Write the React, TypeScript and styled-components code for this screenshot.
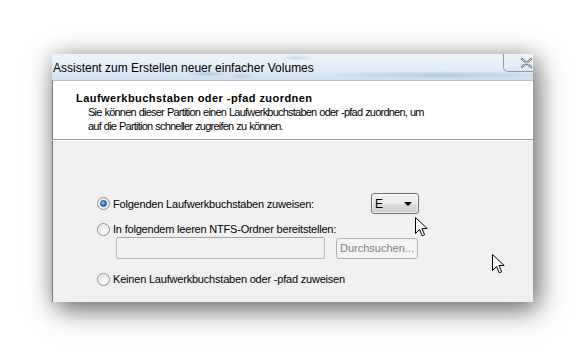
import React from 'react';
import styled, { createGlobalStyle } from 'styled-components';

const GlobalStyle = createGlobalStyle`
  html, body {
    margin: 0;
    padding: 0;
    background: #ffffff;
  }
  body {
    width: 585px;
    height: 354px;
    overflow: hidden;
    font-family: "Liberation Sans", Arial, sans-serif;
  }
`;

const Page = styled.div`
  position: relative;
  width: 585px;
  height: 354px;
  padding: 54px 0 0 52px;
  box-sizing: border-box;
`;

const Dialog = styled.div`
  width: 481px;
  height: 248px;
  display: flex;
  flex-direction: column;
  box-shadow: 5px 8px 26px rgba(0, 0, 0, 0.55), 0 0 20px rgba(0, 0, 0, 0.16);
  overflow: hidden;
  background: #f0f0f0;
`;

const TitleBar = styled.div`
  height: 26px;
  flex: none;
  display: flex;
  align-items: flex-start;
  overflow: hidden;
  background:
    radial-gradient(ellipse 22px 3px at 155px 20px, rgba(110, 150, 200, 0.35), transparent),
    radial-gradient(ellipse 14px 3px at 190px 22px, rgba(110, 150, 200, 0.3), transparent),
    radial-gradient(ellipse 18px 3px at 245px 4px, rgba(110, 150, 200, 0.3), transparent),
    radial-gradient(ellipse 120px 4px at 390px 21px, rgba(110, 150, 200, 0.35), transparent),
    linear-gradient(to bottom, #eef4fa 0%, #e3edf7 55%, #cfdff0 100%);
`;

const TitleText = styled.div`
  padding: 6px 0 0 1px;
  font-size: 12px;
  line-height: 16px;
  color: #000;
`;

const CloseButton = styled.div`
  margin-left: auto;
  margin-right: -16px;
  width: 44px;
  height: 17px;
  flex: none;
  border: 1px solid #8a9aa8;
  border-top: none;
  border-radius: 0 0 5px 5px;
  background: linear-gradient(to bottom, #f1f5f9, #dde7f0);
  display: flex;
  align-items: center;
  justify-content: center;
`;

const Header = styled.div`
  height: 60px;
  flex: none;
  box-sizing: border-box;
  background: #ffffff;
  border-left: 1px solid #7a7a7a;
  border-top: 1px solid #b7c4d0;
  border-bottom: 1px solid #a0a0a0;
  padding: 10px 0 0 23px;
`;

const HeaderTitle = styled.div`
  font-size: 11px;
  font-weight: bold;
  line-height: 14px;
  color: #000;
  letter-spacing: 0.45px;
`;

const HeaderText = styled.div`
  padding-left: 12px;
  font-size: 11px;
  line-height: 14px;
  color: #000;
  letter-spacing: -0.78px;
  word-spacing: 0.6px;
`;

const Body = styled.div`
  flex: 1;
  border-left: 1px solid #7a7a7a;
  border-top: 1px solid #ffffff;
  padding: 0 0 0 44px;
  display: flex;
  flex-direction: column;
  font-size: 11px;
  color: #000;
`;

const OptionRow = styled.div<{ $height: number; $top: number; $indent?: number }>`
  width: 322px;
  height: ${(p) => p.$height}px;
  margin-top: ${(p) => p.$top}px;
  padding-left: ${(p) => p.$indent ?? 0}px;
  box-sizing: border-box;
  display: flex;
  align-items: center;
  gap: 3px;
`;

const Radio = styled.span<{ $checked?: boolean }>`
  width: 11px;
  height: 11px;
  flex: none;
  border-radius: 50%;
  border: 1px solid #8f8f8f;
  background: radial-gradient(circle at 60% 65%, #ffffff 0%, #e8e8e8 55%, #cfcfcf 100%);
  display: flex;
  align-items: center;
  justify-content: center;
  box-shadow: inset 0 0 0 1px #f6f6f6;

  &::after {
    content: '';
    display: ${(p) => (p.$checked ? 'block' : 'none')};
    width: 5px;
    height: 5px;
    border-radius: 50%;
    border: 1px solid #1c4f8f;
    background: radial-gradient(circle at 40% 35%, #9fd1ff 0%, #2f7ad8 55%, #104a98 100%);
  }
`;

const Label = styled.span`
  line-height: 14px;
  white-space: nowrap;
  letter-spacing: -0.2px;
`;

const Combo = styled.div`
  margin-left: auto;
  width: 48px;
  height: 21px;
  box-sizing: border-box;
  border: 1px solid #707070;
  border-radius: 3px;
  background: linear-gradient(to bottom, #f2f2f2 0%, #ebebeb 50%, #dddddd 51%, #cfcfcf 100%);
  box-shadow: inset 0 0 0 1px rgba(255, 255, 255, 0.7);
  display: flex;
  align-items: center;
  justify-content: space-between;
  padding: 0 6px 0 3px;
  font-size: 12px;
`;

const Arrow = styled.span`
  width: 0;
  height: 0;
  border-left: 4px solid transparent;
  border-right: 4px solid transparent;
  border-top: 4px solid #000;
`;

const TextBox = styled.div`
  width: 209px;
  height: 22px;
  box-sizing: border-box;
  border: 1px solid #b8b8b8;
  border-top-color: #a8a8a8;
  border-radius: 2px;
  background: #f0f0f0;
`;

const ButtonDisabled = styled.div`
  margin-left: 8px;
  width: 82px;
  height: 21px;
  box-sizing: border-box;
  border: 1px solid #adb2b5;
  border-radius: 3px;
  background: #f4f4f4;
  color: #838383;
  font-size: 11px;
  display: flex;
  align-items: center;
  justify-content: center;
`;

const Cursor = styled.svg<{ $x: number; $y: number }>`
  position: absolute;
  left: ${(p) => p.$x}px;
  top: ${(p) => p.$y}px;
  width: 13px;
  height: 20px;
  overflow: visible;
`;

const ArrowCursor: React.FC<{ x: number; y: number }> = ({ x, y }) => (
  <Cursor $x={x} $y={y} viewBox="0 0 13 20">
    <path
      d="M0.5 0.5 L0.5 16.5 L4.5 12.5 L7.2 18.8 L9.6 17.8 L7 11.5 L12.2 11.5 Z"
      fill="#ffffff"
      stroke="#000000"
      strokeWidth="1"
      strokeLinejoin="miter"
    />
  </Cursor>
);

export default function App() {
  return (
    <>
      <GlobalStyle />
      <Page>
        <Dialog>
          <TitleBar>
            <TitleText>Assistent zum Erstellen neuer einfacher Volumes</TitleText>
            <CloseButton>
              <svg width="11" height="10" viewBox="0 0 11 10">
                <path
                  d="M1 1 L10 9 M10 1 L1 9"
                  stroke="#5a6470"
                  strokeWidth="2.2"
                  strokeLinecap="round"
                />
                <path
                  d="M1 1 L10 9 M10 1 L1 9"
                  stroke="#f4f6f8"
                  strokeWidth="0.9"
                  strokeLinecap="round"
                />
              </svg>
            </CloseButton>
          </TitleBar>
          <Header>
            <HeaderTitle>Laufwerkbuchstaben oder -pfad zuordnen</HeaderTitle>
            <HeaderText>
              Sie können dieser Partition einen Laufwerkbuchstaben oder -pfad zuordnen, um
              <br />
              auf die Partition schneller zugreifen zu können.
            </HeaderText>
          </Header>
          <Body>
            <OptionRow $height={21} $top={52}>
              <Radio $checked />
              <Label>Folgenden Laufwerkbuchstaben zuweisen:</Label>
              <Combo>
                <span>E</span>
                <Arrow />
              </Combo>
            </OptionRow>
            <OptionRow $height={16} $top={7}>
              <Radio />
              <Label>In folgendem leeren NTFS-Ordner bereitstellen:</Label>
            </OptionRow>
            <OptionRow $height={22} $top={0} $indent={19}>
              <TextBox />
              <ButtonDisabled>Durchsuchen...</ButtonDisabled>
            </OptionRow>
            <OptionRow $height={16} $top={12}>
              <Radio />
              <Label>Keinen Laufwerkbuchstaben oder -pfad zuweisen</Label>
            </OptionRow>
          </Body>
        </Dialog>
        <ArrowCursor x={415} y={217} />
        <ArrowCursor x={492} y={254} />
      </Page>
    </>
  );
}
